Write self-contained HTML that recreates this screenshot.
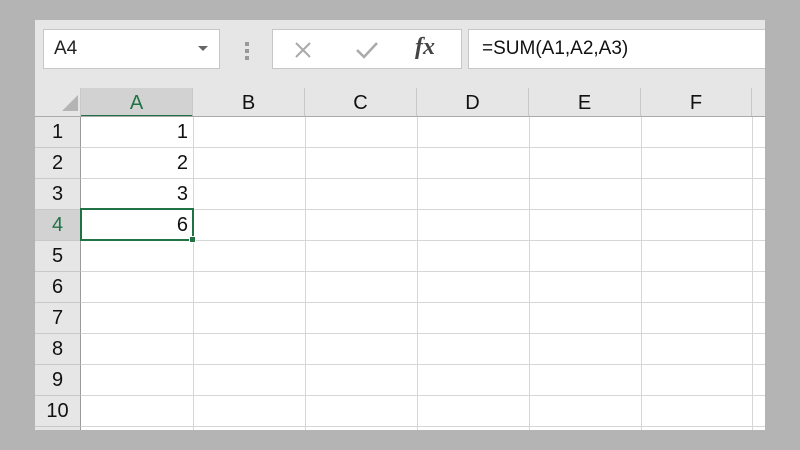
<!DOCTYPE html>
<html><head><style>
*{margin:0;padding:0;box-sizing:border-box}
body{width:800px;height:450px;background:#b4b4b4;position:relative;overflow:hidden;font-family:"Liberation Sans",Arial,sans-serif}
.app{position:absolute;left:35px;top:20px;width:730px;height:410px;background:#e6e6e6;overflow:hidden}
.box{position:absolute;background:#fff;border:1px solid #c6c6c6}
.ab{position:absolute}
.grid{position:absolute;left:0;top:97px;width:730px;height:313px;background:#fff}
.ch{position:absolute;top:68px;height:29px;background:#e6e6e6;border-right:1px solid #c8c8c8;font-size:20px;color:#111;text-align:center;line-height:31px}
.rh{position:absolute;left:0;width:46px;height:31px;background:#e6e6e6;border-bottom:1px solid #c8c8c8;border-right:1px solid #9b9b9b;font-size:20px;color:#111;text-align:center;line-height:31px}
.hl{position:absolute;left:46px;right:0;height:1px;background:#d6d6d6}
.vl{position:absolute;top:68px;width:1px;height:342px;background:#d6d6d6}
.num{position:absolute;left:46px;width:112px;text-align:right;padding-right:5px;font-size:20px;line-height:31px;color:#111}
</style></head><body>
<div class="app">
  <div class="box" style="left:8px;top:9px;width:177px;height:40px;font-size:19px;line-height:38px;padding-left:10px;color:#222">A4</div>
  <div class="ab" style="left:163px;top:26px;width:0;height:0;border-left:5px solid transparent;border-right:5px solid transparent;border-top:5px solid #666"></div>
  <div class="ab" style="left:210px;top:22px;width:4px;height:4px;background:#999"></div>
  <div class="ab" style="left:210px;top:29px;width:4px;height:4px;background:#999"></div>
  <div class="ab" style="left:210px;top:36px;width:4px;height:4px;background:#999"></div>
  <div class="box" style="left:237px;top:9px;width:190px;height:40px"></div>
  <svg class="ab" style="left:258px;top:20px" width="20" height="20"><path d="M3 3L17 17M17 3L3 17" stroke="#aaa" stroke-width="2"/></svg>
  <svg class="ab" style="left:320px;top:20px" width="24" height="20"><path d="M2 10L9 17L22 3" stroke="#aaa" stroke-width="2.5" fill="none"/></svg>
  <div class="ab" style="left:380px;top:14px;font-family:'Liberation Serif',serif;font-style:italic;font-weight:bold;font-size:24px;color:#444">fx</div>
  <div class="box" style="left:433px;top:9px;width:310px;height:40px;font-size:19px;line-height:38px;padding-left:13px;color:#111">=SUM(A1,A2,A3)</div>
  <div class="grid"></div>
  <div class="ab" style="left:0;top:68px;width:46px;height:29px;background:#e6e6e6;border-right:1px solid #c8c8c8"></div>
  <div class="ab" style="left:27px;top:75px;width:0;height:0;border-left:16px solid transparent;border-bottom:16px solid #b4b4b4"></div>
  <div class="ch" style="left:46px;width:112px;background:#d2d2d2;color:#217346;border-bottom:2px solid #217346">A</div>
  <div class="ch" style="left:158px;width:112px">B</div>
  <div class="ch" style="left:270px;width:112px">C</div>
  <div class="ch" style="left:382px;width:112px">D</div>
  <div class="ch" style="left:494px;width:112px">E</div>
  <div class="ch" style="left:606px;width:111px">F</div>
  <div class="ch" style="left:717px;width:20px;border-right:none"></div>
  <div class="ab" style="left:0;top:96px;width:730px;height:1px;background:#ababab"></div>
  <div class="vl" style="left:158px;top:97px"></div><div class="vl" style="left:270px;top:97px"></div><div class="vl" style="left:382px;top:97px"></div><div class="vl" style="left:494px;top:97px"></div><div class="vl" style="left:606px;top:97px"></div><div class="vl" style="left:717px;top:97px"></div>
  <div class="rh" style="top:97px">1</div><div class="hl" style="top:127px"></div>
  <div class="rh" style="top:128px">2</div><div class="hl" style="top:158px"></div>
  <div class="rh" style="top:159px">3</div><div class="hl" style="top:189px"></div>
  <div class="rh" style="top:190px;background:#d2d2d2;color:#217346">4</div><div class="hl" style="top:220px"></div>
  <div class="rh" style="top:221px">5</div><div class="hl" style="top:251px"></div>
  <div class="rh" style="top:252px">6</div><div class="hl" style="top:282px"></div>
  <div class="rh" style="top:283px">7</div><div class="hl" style="top:313px"></div>
  <div class="rh" style="top:314px">8</div><div class="hl" style="top:344px"></div>
  <div class="rh" style="top:345px">9</div><div class="hl" style="top:375px"></div>
  <div class="rh" style="top:376px">10</div><div class="hl" style="top:406px"></div>
  <div class="rh" style="top:407px;height:10px"></div>
  <div class="num" style="top:97px">1</div>
  <div class="num" style="top:128px">2</div>
  <div class="num" style="top:159px">3</div>
  <div class="num" style="top:190px">6</div>
  <div class="ab" style="left:45px;top:188px;width:114px;height:33px;border:2px solid #217346"></div>
  <div class="ab" style="left:154px;top:216px;width:7px;height:7px;background:#217346;border:1px solid #fff"></div>
</div>
</body></html>
